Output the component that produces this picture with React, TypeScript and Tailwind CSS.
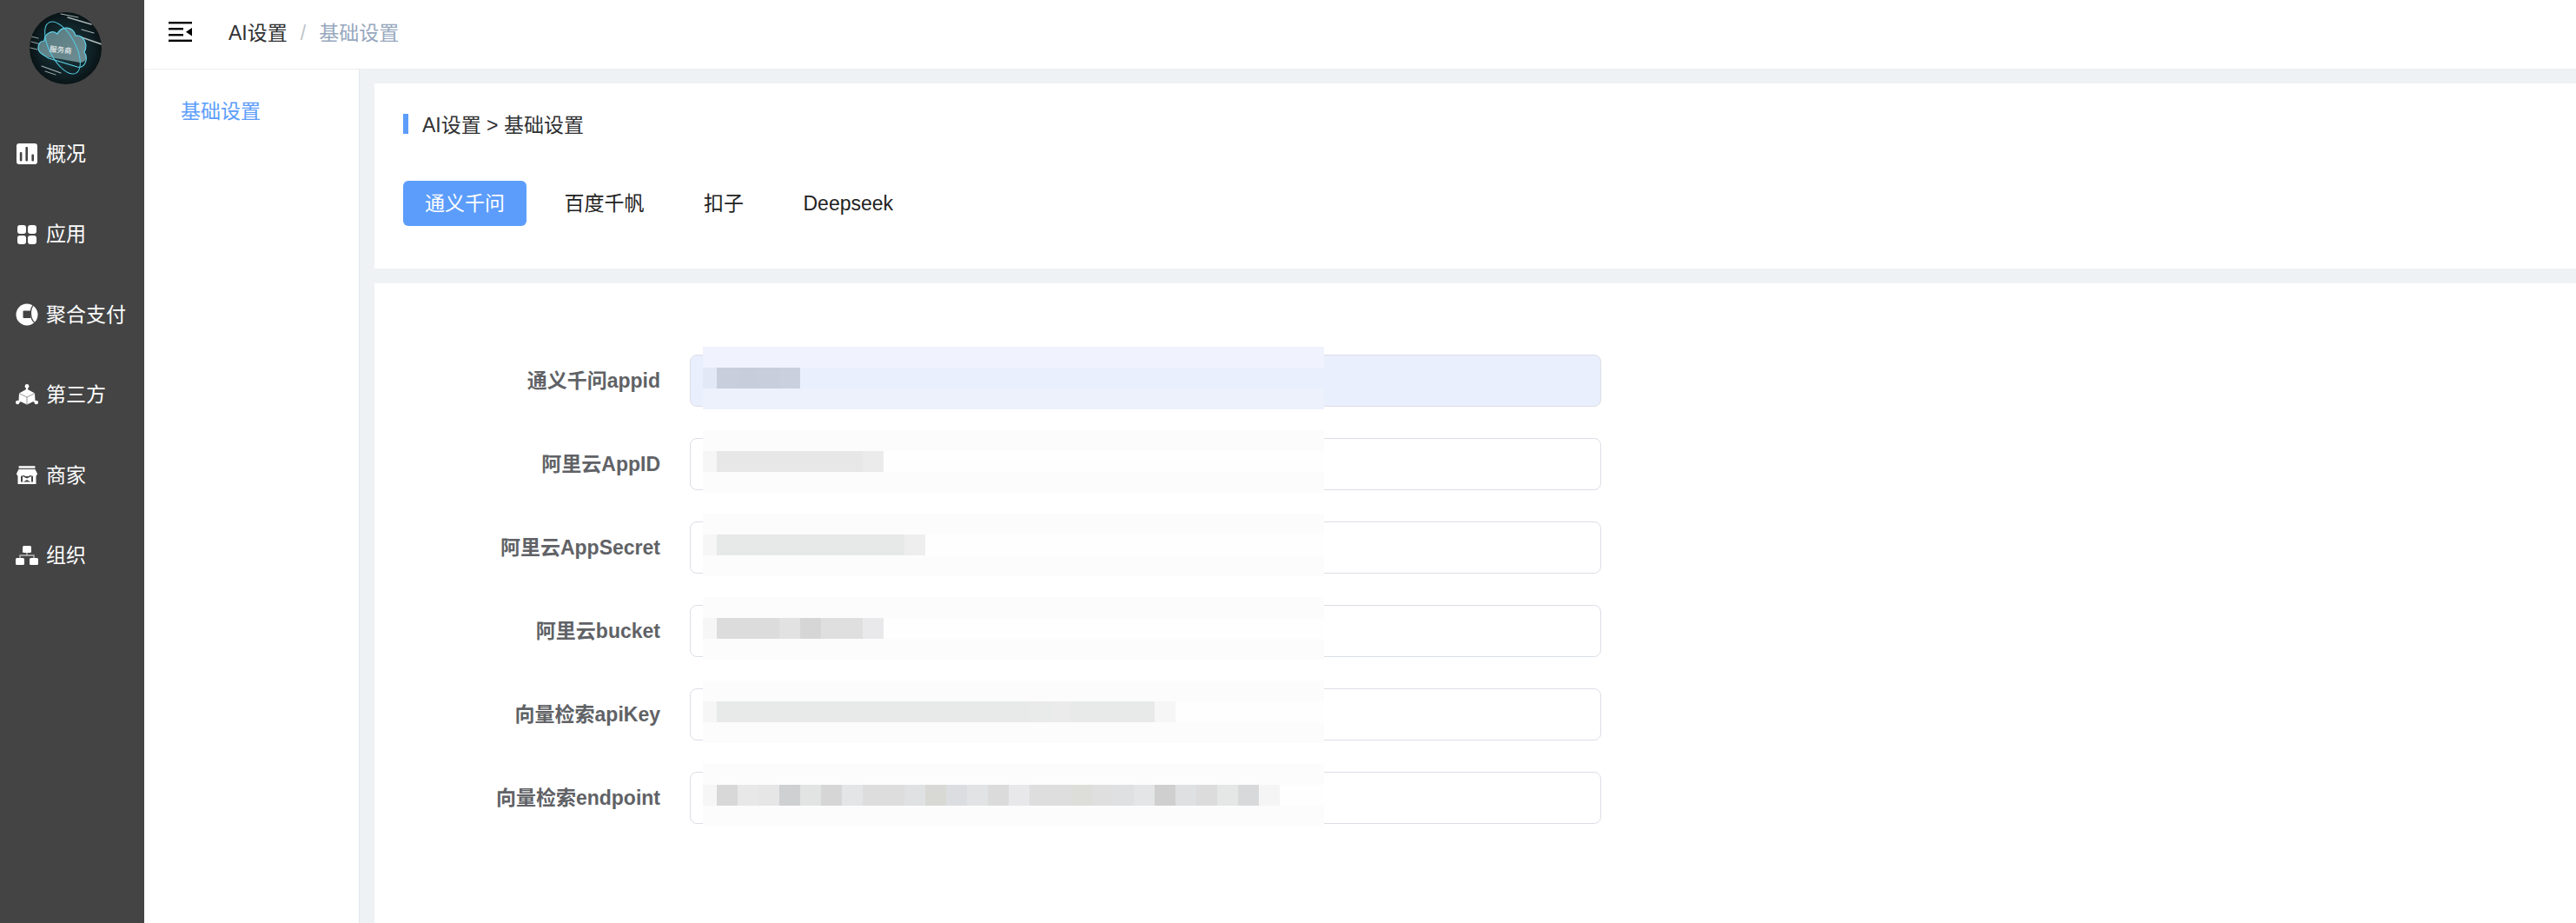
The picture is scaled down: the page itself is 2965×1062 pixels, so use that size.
import React from 'react';

const menuItems = [
  { label: '概况', icon: <ChartIcon /> },
  { label: '应用', icon: <AppsIcon /> },
  { label: '聚合支付', icon: <PayIcon /> },
  { label: '第三方', icon: <CubeIcon /> },
  { label: '商家', icon: <ShopIcon /> },
  { label: '组织', icon: <OrgIcon /> },
];

const tabs = ['通义千问', '百度千帆', '扣子', 'Deepseek'];

// pixelated values, one colour per 24px block
const fields = [
  {
    label: '通义千问appid',
    active: true,
    top: '#f0f3fd',
    edge: '#e3e8f7',
    bottom: '#edf1fc',
    rest: '#e9effd',
    cells: ['#c9cedc', '#c8cddb', '#c9cedd', '#cbd0de'],
  },
  {
    label: '阿里云AppID',
    top: '#fcfcfc',
    edge: '#f6f6f6',
    bottom: '#fcfcfc',
    rest: '#fefefe',
    cells: ['#e7e7e7', '#e7e7e7', '#e7e7e7', '#e7e7e7', '#e7e7e7', '#e7e7e7', '#e7e7e7', '#ebebeb'],
  },
  {
    label: '阿里云AppSecret',
    top: '#fcfcfc',
    edge: '#f6f6f6',
    bottom: '#fcfcfc',
    rest: '#fefefe',
    cells: ['#e7e8e8', '#e7e8e8', '#e7e8e8', '#e7e8e8', '#e7e8e8', '#e7e8e8', '#e7e8e8', '#e7e8e8', '#e7e8e8', '#eeeeee'],
  },
  {
    label: '阿里云bucket',
    top: '#fcfcfc',
    edge: '#f6f6f6',
    bottom: '#fcfcfc',
    rest: '#fefefe',
    cells: ['#dcdcdc', '#dcdcdc', '#dcdcdc', '#e2e2e2', '#d6d6d6', '#dfdfdf', '#dfdfdf', '#e9e9eb'],
  },
  {
    label: '向量检索apiKey',
    top: '#fcfcfc',
    edge: '#f6f6f6',
    bottom: '#fcfcfc',
    rest: '#fefefe',
    cells: [
      '#e8e9e9', '#e8e9e9', '#e8e9e9', '#e8e9e9', '#e8e9e9', '#e8e9e9', '#e8e9e9', '#e8e9e9', '#e8e9e9', '#e8e9e9', '#e8e9e9',
      '#e8e9e9', '#e8e9e9', '#e8e9e9', '#e8e9e9', '#e9eaea', '#ebebeb', '#e8e9e9', '#e8e9e9', '#e8e9e9', '#e8e9e9', '#f6f6f6',
    ],
  },
  {
    label: '向量检索endpoint',
    top: '#fcfcfc',
    edge: '#f6f6f6',
    bottom: '#fcfcfc',
    rest: '#fefefe',
    cells: [
      '#d8d8d8', '#e8e8e8', '#e6e6e6', '#cfd0d2', '#e2e3e3', '#d6d6d6', '#e4e5e7', '#dddddd', '#dddddd', '#e0e1e3', '#d8d8d5',
      '#dcdde0', '#e2e3e5', '#dbdbdb', '#e8e8ea', '#dedede', '#dedede', '#dddddA', '#dfdfdf', '#dfe0e2', '#e4e5e6', '#cfcfcf',
      '#dfe0e2', '#dcdcdd', '#e5e6e6', '#d8d9db', '#f5f5f5',
    ],
  },
];

function ChartIcon() {
  return (
    <svg viewBox="0 0 24 24" className="w-6 h-6">
      <rect width="24" height="24" rx="3" fill="#fff" />
      <rect x="3.8" y="10" width="2.6" height="10.5" rx="1" fill="#444" />
      <rect x="10.4" y="4" width="2.6" height="16.5" rx="1" fill="#444" />
      <rect x="17.4" y="12.5" width="2.6" height="8" rx="1" fill="#444" />
    </svg>
  );
}

function AppsIcon() {
  return (
    <svg viewBox="0 0 22 22" className="w-[22px] h-[22px]">
      <rect width="10" height="10" rx="3" fill="#fff" />
      <rect x="12" width="10" height="10" rx="3" fill="#fff" />
      <rect y="12" width="10" height="10" rx="3" fill="#fff" />
      <rect x="12" y="12" width="10" height="10" rx="3" fill="#fff" />
    </svg>
  );
}

function PayIcon() {
  return (
    <svg viewBox="0 0 26 26" className="w-[26px] h-[26px]">
      <circle cx="13" cy="13" r="12.5" fill="#fff" />
      <rect x="8.5" y="8.5" width="9" height="8.5" rx="1" fill="#444" />
      <path d="M21 1.5 C16 6 16 18 22.5 23" fill="none" stroke="#444" strokeWidth="1.3" />
    </svg>
  );
}

function CubeIcon() {
  return (
    <svg viewBox="0 0 26 24" className="w-[26px] h-6">
      <circle cx="13" cy="2.4" r="2.4" fill="#fff" />
      <path d="M13 3 V7 M2.5 21 L6 18.5 M23.5 21 L20 18.5" stroke="#fff" strokeWidth="2.2" />
      <circle cx="2.2" cy="21" r="2.2" fill="#fff" />
      <circle cx="23.8" cy="21" r="2.2" fill="#fff" />
      <path d="M13 5.5 L22 10.5 L22.5 19 L13 23.5 L3.5 19 L4 10.5 Z" fill="#fff" />
      <path d="M4 10.5 L13 15 L22 10.5 M13 15 V23.5" fill="none" stroke="#8a8a8a" strokeWidth="0.9" />
    </svg>
  );
}

function ShopIcon() {
  return (
    <svg viewBox="0 0 24 21" className="w-6 h-[21px]">
      <rect x="2.5" y="0" width="19" height="3" rx="0.8" fill="#e4e4e4" />
      <path d="M2.5 4 H21.5 L24 9 C24 12.5 18 12.5 16 10.8 C14 12.5 10 12.5 8 10.8 C6 12.5 0 12.5 0 9 Z" fill="#fff" />
      <path d="M1.5 10.5 H5 V18.5 H19 V10.5 H22.5 V21 H1.5 Z" fill="#fff" />
      <path d="M7 12 L12 14.5 L17 12 V19 L12 16 L7 19 Z" fill="#fff" />
    </svg>
  );
}

function OrgIcon() {
  return (
    <svg viewBox="0 0 26 22" className="w-[26px] h-[22px]">
      <rect x="8" y="0" width="10" height="8" rx="1.5" fill="#fff" />
      <path d="M13 8 V11 M5 14 V11 H21 V14" fill="none" stroke="#bbb" strokeWidth="1.4" />
      <rect x="0" y="14" width="10" height="8" rx="1.5" fill="#fff" />
      <rect x="16" y="14" width="10" height="8" rx="1.5" fill="#fff" />
    </svg>
  );
}

function Logo() {
  return (
    <svg viewBox="0 0 83 83" className="w-[83px] h-[83px]">
      <defs>
        <radialGradient id="logoBg" cx="50%" cy="50%" r="55%">
          <stop offset="0%" stopColor="#1f3d43" />
          <stop offset="70%" stopColor="#0f2024" />
          <stop offset="100%" stopColor="#080f11" />
        </radialGradient>
        <linearGradient id="cloudFill" x1="0" y1="0" x2="1" y2="1">
          <stop offset="0%" stopColor="#567a80" />
          <stop offset="100%" stopColor="#6f8e93" />
        </linearGradient>
        <clipPath id="logoClip">
          <circle cx="41.5" cy="41.5" r="41.5" />
        </clipPath>
      </defs>
      <g clipPath="url(#logoClip)">
        <rect width="83" height="83" fill="url(#logoBg)" />
        <g stroke="#c4d0d1" strokeLinecap="round" opacity="0.85">
          <path d="M36 2 L56 6" strokeWidth="1" />
          <path d="M44 6 L71 14" strokeWidth="1.4" />
          <path d="M60 20 L74 24" strokeWidth="1.1" />
          <path d="M60 29 L83 37" strokeWidth="1.8" />
          <path d="M2 28 L10 30" strokeWidth="0.9" />
          <path d="M2 34 L13 37" strokeWidth="0.9" />
          <path d="M1 41 L9 43" strokeWidth="0.9" />
          <path d="M14 62 L36 70" strokeWidth="1.1" />
          <path d="M18 68 L30 72" strokeWidth="0.9" />
        </g>
        <path
          d="M14 48 C7 43 10 33 17 33 C17 24 27 20 32 25 C37 15 50 16 53 27 C62 26 68 37 63 46 C68 53 64 58 58 58 L36 54 L22 52 Z"
          fill="url(#cloudFill)"
        />
        <path
          d="M14 48 C7 43 10 33 17 33 C17 24 27 20 32 25 C37 15 50 16 53 27 C62 26 68 37 63 46 C68 53 64 65 55 63 L22 53 Z"
          fill="none"
          stroke="#5fd3ea"
          strokeWidth="1.2"
        />
        <ellipse cx="38" cy="41" rx="15" ry="33" transform="rotate(-28 38 41)" fill="none" stroke="#52c6dd" strokeWidth="1.1" />
        <text
          x="35.5"
          y="46.5"
          transform="rotate(6 35.5 46.5)"
          textAnchor="middle"
          fill="#ffffff"
          fontSize="8.5"
          fontFamily="'Noto Sans CJK SC', sans-serif"
        >
          服务商
        </text>
      </g>
    </svg>
  );
}

function MenuFoldIcon() {
  return (
    <svg viewBox="0 0 27 23" className="w-[27px] h-[23px] mb-[3px] text-black">
      <rect y="0" width="27" height="2.4" fill="currentColor" />
      <rect y="7" width="17" height="2.4" fill="currentColor" />
      <rect y="14" width="17" height="2.4" fill="currentColor" />
      <rect y="20.6" width="27" height="2.4" fill="currentColor" />
      <path d="M27 7 V16.4 L20 11.7 Z" fill="currentColor" />
    </svg>
  );
}

type Field = (typeof fields)[number];

// blurred value sits over the input and spills past its edges
function Mosaic({ field }: { field: Field }) {
  return (
    <div className="absolute left-[15px] -top-[9px] w-[715px] h-[72px] flex flex-col">
      <div className="h-6" style={{ background: field.top }} />
      <div className="h-6 flex" style={{ background: field.rest }}>
        <div className="w-4" style={{ background: field.edge }} />
        {field.cells.map((color, i) => (
          <div key={i} className="w-6" style={{ background: color }} />
        ))}
      </div>
      <div className="h-6" style={{ background: field.bottom }} />
    </div>
  );
}

export default function App() {
  return (
    <div className="flex h-[1062px] w-full overflow-hidden bg-white text-[23px] font-['Liberation_Sans','Noto_Sans_CJK_SC',sans-serif]">
      {/* Left menu */}
      <aside className="w-[166px] shrink-0 bg-[#444444] text-white">
        <div className="h-[131px] pt-[14px] pl-[34px]">
          <Logo />
        </div>
        {menuItems.map((item) => (
          <div key={item.label} className="h-[92.4px] flex items-center">
            <div className="w-[44px] ml-[9px] flex justify-center shrink-0">{item.icon}</div>
            <span className="whitespace-nowrap text-white">{item.label}</span>
          </div>
        ))}
      </aside>

      <div className="flex-1 min-w-0 flex flex-col">
        {/* Top bar */}
        <header className="h-20 shrink-0 bg-white border-b border-[#eeeeee] flex items-center pl-7 pb-[3px]">
          <MenuFoldIcon />
          <span className="ml-[42px] text-[#303133]">AI设置</span>
          <span className="ml-[15px] mr-[15px] text-[#c0c4cc]">/</span>
          <span className="text-[#97a8be]">基础设置</span>
        </header>

        <div className="flex-1 min-h-0 flex">
          {/* Sub menu */}
          <nav className="w-[247px] shrink-0 bg-white pl-[42px] pt-[31px] text-[#5c9dfb]">基础设置</nav>

          <main className="flex-1 min-w-0 bg-[#eff2f5] border-l border-[#e4e7ed] pl-[17px] pt-4 flex flex-col gap-[17px]">
            <section className="h-[213px] shrink-0 bg-white pl-[33px] pt-[35px]">
              <div className="h-[23px] border-l-[6px] border-[#5c9dfb] pl-4 flex items-center text-[#303133]">
                <span className="mt-1">AI设置 &gt; 基础设置</span>
              </div>
              <div className="mt-[54px] flex gap-[18.5px]">
                {tabs.map((tab, i) => (
                  <button
                    key={tab}
                    className={`h-[52px] px-[25px] rounded-[6px] whitespace-nowrap ${
                      i === 0 ? 'bg-[#5c9dfb] text-white' : 'text-[#222222]'
                    }`}
                  >
                    {tab}
                  </button>
                ))}
              </div>
            </section>

            <section className="flex-1 bg-white pt-[82px] flex flex-col gap-9">
              {fields.map((field) => (
                <div key={field.label} className="flex items-center">
                  <label className="w-[329px] shrink-0 text-right font-bold text-[#606266] whitespace-nowrap">
                    {field.label}
                  </label>
                  <div className="relative ml-[34px] w-[1049px] h-[60px]">
                    <input
                      readOnly
                      className={`block w-full h-full rounded-[8px] border-[1.5px] border-[#dcdee6] outline-none ${
                        field.active ? 'bg-[#e9effd]' : 'bg-white'
                      }`}
                    />
                    <Mosaic field={field} />
                  </div>
                </div>
              ))}
            </section>
          </main>
        </div>
      </div>
    </div>
  );
}
